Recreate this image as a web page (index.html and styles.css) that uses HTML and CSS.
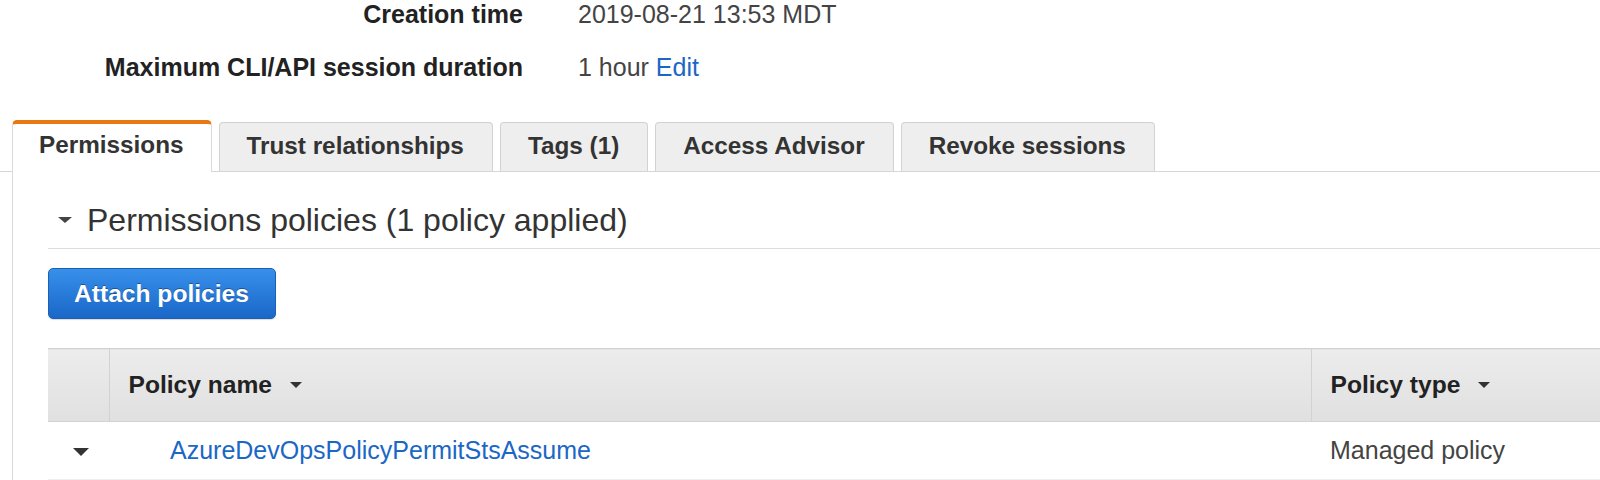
FILE: index.html
```html
<!DOCTYPE html>
<html>
<head>
<meta charset="utf-8">
<link rel="stylesheet" href="styles.css">
</head>
<body>
<div class="summary">
  <div class="label">Creation time</div>
  <div class="value">2019-08-21 13:53 MDT</div>
  <div class="label">Maximum CLI/API session duration</div>
  <div class="value">1 hour <a class="link">Edit</a></div>
</div>

<div class="tabs">
  <div class="tab active">Permissions</div>
  <div class="tab">Trust relationships</div>
  <div class="tab">Tags (1)</div>
  <div class="tab">Access Advisor</div>
  <div class="tab">Revoke sessions</div>
</div>

<div class="panel">
  <div class="section-head"><span class="caret caret-head"></span><span>Permissions policies (1 policy applied)</span></div>
  <button class="btn-primary">Attach policies</button>
  <table class="policies">
    <thead>
      <tr>
        <th class="col-toggle"></th>
        <th class="col-name"><span class="th-inner">Policy name <span class="caret caret-sort"></span></span></th>
        <th class="col-type"><span class="th-inner">Policy type <span class="caret caret-sort"></span></span></th>
      </tr>
    </thead>
    <tbody>
      <tr>
        <td class="col-toggle"><span class="caret caret-row"></span></td>
        <td class="cell-name"><a class="link">AzureDevOpsPolicyPermitStsAssume</a></td>
        <td class="cell-type">Managed policy</td>
      </tr>
    </tbody>
  </table>
</div>
</body>
</html>
```

FILE: styles.css
```css
* { box-sizing: border-box; }

html, body {
  margin: 0;
  padding: 0;
  background: #ffffff;
  overflow: hidden;
}

body {
  font-family: "Liberation Sans", Arial, Helvetica, sans-serif;
  color: #333;
  width: 1600px;
  height: 480px;
}

.link {
  color: #1b67c5;
  text-decoration: none;
  cursor: pointer;
}

/* summary rows */
.summary {
  display: grid;
  grid-template-columns: 523px auto;
  column-gap: 55px;
  row-gap: 25px;
  line-height: 28px;
}

.label {
  text-align: right;
  font-weight: bold;
  font-size: 25px;
  color: #222;
}

.value {
  font-size: 25px;
  color: #444;
}

/* tabs */
.tabs {
  display: flex;
  align-items: flex-end;
  gap: 7px;
  margin-top: 39px;
  padding-left: 12px;
  border-bottom: 1px solid #d6d6d6;
  height: 52px;
}

.tab {
  height: 49px;
  padding: 0 28px 2px 27px;
  display: flex;
  align-items: center;
  justify-content: center;
  background: #eeeeee;
  border: 1px solid #d2d2d2;
  border-bottom: none;
  border-radius: 4px 4px 0 0;
  font-weight: bold;
  font-size: 24.3px;
  color: #333;
  white-space: nowrap;
}

.tab.active {
  height: 52px;
  margin-bottom: -1px;
  padding: 0 27px 6px 26px;
  background: #ffffff;
  border-top: 4px solid #e8780f;
  border-left: 1px solid #dadada;
  border-right: 1px solid #dadada;
  border-radius: 5px 5px 0 0;
}

/* panel */
.panel {
  margin-left: 12px;
  border-left: 1px solid #d9d9d9;
  padding-left: 35px;
  padding-top: 28px;
  height: 330px;
}

.section-head {
  display: flex;
  align-items: center;
  height: 40px;
  font-size: 32px;
  color: #333;
  border-bottom: 1px solid #dcdcdc;
  box-sizing: content-box;
  padding-bottom: 8px;
}

.caret {
  display: inline-block;
  width: 0;
  height: 0;
  border-left: 7px solid transparent;
  border-right: 7px solid transparent;
  border-top: 7px solid #444;
}

.caret-head {
  margin-left: 10px;
  margin-right: 15px;
  border-left-width: 7px;
  border-right-width: 7px;
  border-top-width: 6px;
  border-top-color: #444;
}

.btn-primary {
  display: block;
  margin-top: 19px;
  height: 51px;
  padding: 0 26px 0 25px;
  font-family: inherit;
  font-weight: bold;
  font-size: 24.6px;
  color: #ffffff;
  text-shadow: 0 -1px 0 rgba(0, 0, 0, 0.35);
  background: linear-gradient(#3790ea, #1a67c8);
  border: 1px solid #1c5fb3;
  border-radius: 5px;
  box-shadow: 0 1px 1px rgba(0, 0, 0, 0.15);
}

/* table */
.policies {
  margin-top: 29px;
  width: 1553px;
  border-collapse: collapse;
  table-layout: fixed;
}

.policies th {
  height: 73px;
  padding: 0;
  text-align: left;
  background: linear-gradient(#ececec, #e0e0e0);
  border-top: 1px solid #d0d0d0;
  border-bottom: 1px solid #d3d3d3;
  font-weight: bold;
  font-size: 24.6px;
  color: #222;
  white-space: nowrap;
}

.policies th + th {
  border-left: 1px solid #d2d2d2;
}

.col-toggle { width: 61px; }
.col-name { width: 1202px; }

.th-inner {
  display: inline-flex;
  align-items: center;
  padding-left: 19px;
}

.caret-sort {
  margin-left: 18px;
  border-left-width: 6px;
  border-right-width: 6px;
  border-top-width: 6px;
  border-top-color: #333;
}

.policies td {
  height: 58px;
  padding: 0;
  font-size: 25px;
  color: #444;
  border-bottom: 1px solid #efefef;
  white-space: nowrap;
}

.policies td.col-toggle {
  text-align: center;
  padding-left: 4px;
}

.caret-row {
  border-left-width: 8px;
  border-right-width: 8px;
  border-top-width: 8px;
  border-top-color: #333;
  vertical-align: middle;
}

.cell-name {
  padding-left: 61px !important;
}

.cell-type {
  padding-left: 19px !important;
}
```
